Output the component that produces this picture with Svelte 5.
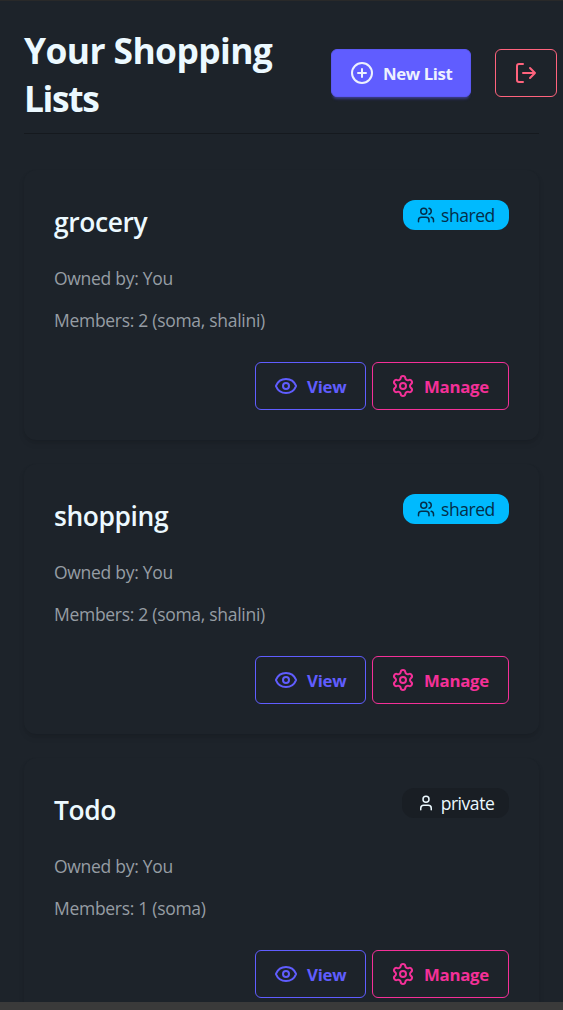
<script>
  const lists = [
    { name: 'grocery', type: 'shared', members: '2 (soma, shalini)' },
    { name: 'shopping', type: 'shared', members: '2 (soma, shalini)' },
    { name: 'Todo', type: 'private', members: '1 (soma)' }
  ];
</script>

{#snippet icon(name)}
  <svg class="icon" viewBox="0 0 24 24" fill="none" stroke="currentColor" stroke-width="2" stroke-linecap="round" stroke-linejoin="round" aria-hidden="true">
    {#if name === 'plus'}
      <circle cx="12" cy="12" r="10" /><path d="M8 12h8M12 8v8" />
    {:else if name === 'logout'}
      <path d="m16 17 5-5-5-5M21 12H9M9 21H5a2 2 0 0 1-2-2V5a2 2 0 0 1 2-2h4" />
    {:else if name === 'shared'}
      <path d="M16 21v-2a4 4 0 0 0-4-4H6a4 4 0 0 0-4 4v2M16 3.128a4 4 0 0 1 0 7.744M22 21v-2a4 4 0 0 0-3-3.87" /><circle cx="9" cy="7" r="4" />
    {:else if name === 'private'}
      <path d="M19 21v-2a4 4 0 0 0-4-4H9a4 4 0 0 0-4 4v2" /><circle cx="12" cy="7" r="4" />
    {:else if name === 'eye'}
      <path d="M2.062 12.348a1 1 0 0 1 0-.696 10.75 10.75 0 0 1 19.876 0 1 1 0 0 1 0 .696 10.75 10.75 0 0 1-19.876 0" /><circle cx="12" cy="12" r="3" />
    {:else}
      <path d="M9.671 4.136a2.34 2.34 0 0 1 4.659 0 2.34 2.34 0 0 0 3.319 1.915 2.34 2.34 0 0 1 2.33 4.033 2.34 2.34 0 0 0 0 3.831 2.34 2.34 0 0 1-2.33 4.033 2.34 2.34 0 0 0-3.319 1.915 2.34 2.34 0 0 1-4.659 0 2.34 2.34 0 0 0-3.32-1.915 2.34 2.34 0 0 1-2.33-4.033 2.34 2.34 0 0 0 0-3.831A2.34 2.34 0 0 1 6.35 6.051a2.34 2.34 0 0 0 3.319-1.915" /><circle cx="12" cy="12" r="3" />
    {/if}
  </svg>
{/snippet}

<div class="screen">
  <main>
    <header>
      <h1>Your Shopping Lists</h1>
      <div class="tools">
        <button class="btn new">{@render icon('plus')}<span>New List</span></button>
        <button class="btn logout" aria-label="Log out">{@render icon('logout')}</button>
      </div>
    </header>
    <div class="cards">
      {#each lists as list}
        <article>
          <div class="top">
            <h2>{list.name}</h2>
            <span class="badge {list.type}">{@render icon(list.type)}<span>{list.type}</span></span>
          </div>
          <p class="owner">Owned by: You</p>
          <p>Members: {list.members}</p>
          <div class="actions">
            <button class="btn view">{@render icon('eye')}<span>View</span></button>
            <button class="btn manage">{@render icon('gear')}<span>Manage</span></button>
          </div>
        </article>
      {/each}
    </div>
  </main>
  <footer></footer>
</div>

<style>
  :global(body) { background: #1d232a; overflow: hidden; }
  * { box-sizing: border-box; }
  .screen {
    height: 1010px;
    display: flex;
    flex-direction: column;
    overflow: hidden;
    border-top: 1px solid #292929;
    background: #1d232a;
    color: #ecf9ff;
    font-family: "Segoe UI", "Open Sans", "Noto Sans", sans-serif;
  }
  main { flex: 1; min-height: 0; overflow: hidden; padding: 25px 24px 0; }
  footer { flex: none; height: 8px; background: #3a3a3a; }
  header {
    display: flex;
    height: 108px;
    border-bottom: 1px solid #15191e;
    justify-content: space-between;
  }
  h1 { margin: 0; width: 270px; flex: none; font-size: 35.4px; line-height: 48px; font-weight: 700; letter-spacing: -1.4px; }
  h1::first-line { letter-spacing: -0.6px; }
  .tools { display: flex; gap: 24px; flex: none; padding-top: 23px; margin-right: -18px; }
  .btn {
    display: flex;
    align-items: center;
    gap: 9px;
    height: 48px;
    padding: 0 0 0 18px;
    border: 1px solid currentColor;
    border-radius: 6px;
    background: transparent;
    font: 700 16.8px "Segoe UI", "Open Sans", "Noto Sans", sans-serif;
    letter-spacing: -0.25px;
    white-space: nowrap;
  }
  .icon { width: 24px; height: 24px; flex: none; display: block; }
  .new {
    width: 140px;
    background: #605dff;
    color: #edf1fe;
    border-color: #5b58f2;
    letter-spacing: -0.4px;
    box-shadow: 0 3px 3px -2px #605dff4d, 0 4px 3px -2px #605dff4d;
  }
  .logout { width: 62px; color: #ff637d; }
  .cards { display: flex; flex-direction: column; gap: 24px; padding-top: 36px; }
  article {
    flex: none;
    height: 270px;
    padding: 30px;
    border-radius: 12px;
    background: #1d232a;
    box-shadow: 0 4px 7px -1px #0000001a, 0 2px 5px -2px #0000001a;
  }
  .top { display: flex; justify-content: space-between; align-items: flex-start; height: 57px; }
  h2 { margin: 4px 0 0; font-size: 26.4px; line-height: 36px; font-weight: 600; letter-spacing: -0.4px; }
  .badge {
    display: flex;
    align-items: center;
    justify-content: center;
    gap: 6px;
    height: 30px;
    width: 106px;
    border-radius: 12px;
    font-size: 17.5px;
    line-height: 28px;
    letter-spacing: -0.45px;
  }
  .badge .icon { width: 18px; height: 18px; }
  .badge.shared { background: #00bafe; color: #042e49; }
  .badge.private { width: 107px; background: #191e24; color: #ecf9ff; }
  p { margin: 0 0 12px; height: 30px; font-size: 17.5px; line-height: 30px; letter-spacing: -0.29px; color: #969da4; white-space: nowrap; }
  p.owner { padding-top: 6px; height: 36px; }
  .actions { display: flex; justify-content: flex-end; gap: 6px; margin-top: 27px; }
  .view { width: 111px; color: #605dff; }
  .manage { width: 137px; color: #f43098; }
</style>
